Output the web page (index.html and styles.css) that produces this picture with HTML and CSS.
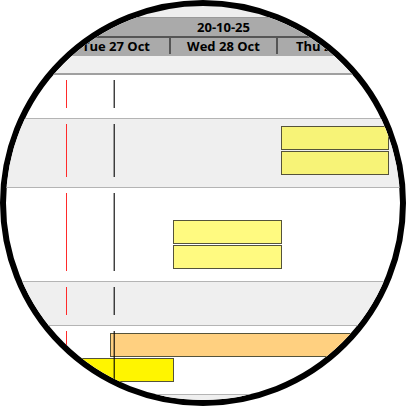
FILE: index.html
```html
<!DOCTYPE html>
<html lang="en">
<head>
<meta charset="utf-8">
<title>Schedule</title>
<link rel="stylesheet" href="styles.css">
</head>
<body>
<main class="lens">
  <header class="scale">
    <div class="week"><span>20-10-25</span></div>
    <div class="days">
      <span class="day">Tue 27 Oct</span>
      <span class="day">Wed 28 Oct</span>
      <span class="day">Thu 29 Oct</span>
    </div>
  </header>
  <div class="summary"></div>
  <section class="row">
    <i class="marker due"></i><i class="marker now"></i>
    <div class="track"></div>
  </section>
  <section class="row shaded">
    <i class="marker due"></i><i class="marker now"></i>
    <div class="track"><div class="bar thu"></div></div>
    <div class="track"><div class="bar thu"></div></div>
  </section>
  <section class="row">
    <i class="marker due"></i><i class="marker now"></i>
    <div class="track"></div>
    <div class="track"><div class="bar wed"></div></div>
    <div class="track"><div class="bar wed"></div></div>
  </section>
  <section class="row shaded">
    <i class="marker due"></i><i class="marker now"></i>
    <div class="track"></div>
  </section>
  <section class="row">
    <i class="marker due"></i><i class="marker now"></i>
    <div class="track"><div class="bar long"></div></div>
    <div class="track"><div class="bar tue"></div></div>
  </section>
  <section class="row shaded">
    <div class="track"></div>
  </section>
</main>
</body>
</html>
```
FILE: styles.css
```css
* {
  box-sizing: border-box;
}

body {
  margin: 0;
  background: #fff;
  font: bold 13px/16px "Open Sans", "Noto Sans", sans-serif;
  color: #000;
  overflow: hidden;
}

.lens {
  width: min(100vw, 100vh);
  aspect-ratio: 1;
  border: 6px solid #000;
  border-radius: 50%;
  background: linear-gradient(#eee 11px, #fff 11px);
  overflow: hidden;
}

.scale {
  margin-top: 11px;
  border-top: 1px solid #999;
  background: #aaa;
  text-align: center;
}

.week,
.days {
  display: grid;
  grid-template-columns: 57px 108px 107px 107px 1fr;
}

.week {
  border-bottom: 2px solid #555;
}

.week span {
  grid-column: 3;
  height: 18px;
  padding-right: 2px;
  line-height: 18px;
}

.days {
  height: 18px;
}

.day {
  height: 16px;
  border-right: 2px solid #555;
}

.day:first-child {
  grid-column: 2;
}

.summary {
  height: 19px;
  background: #f0f0f0;
  border-bottom: 2px solid #a0a0a0;
}

.row {
  position: relative;
  padding: 7px 0 11px;
  border-bottom: 1px solid #b4b4b4;
}

.shaded {
  background: #efefef;
}

.track {
  display: grid;
  grid-template-columns: 60px 107px 108px 107px 1fr;
  height: 25px;
}

.bar {
  height: 24px;
  margin-right: -1px;
  border: 1px solid #55533a;
  background: #fffa80;
}

.shaded .bar {
  background: #f7f377;
}

.tue {
  grid-column: 1 / 3;
  background: #fff500;
}

.wed {
  grid-column: 3;
}

.thu {
  grid-column: 4;
}

.long {
  grid-column: 2 / -1;
  margin-left: 44px;
  background: #ffd080;
}

.marker {
  position: absolute;
  top: 5px;
  bottom: 10px;
}

.due {
  left: 60px;
  border-left: 1px solid #ff2a2a;
}

.now {
  left: 107px;
  width: 2px;
  background: linear-gradient(90deg, rgba(0, 0, 0, 0.35) 50%, rgba(0, 0, 0, 0.75) 50%);
}
```
